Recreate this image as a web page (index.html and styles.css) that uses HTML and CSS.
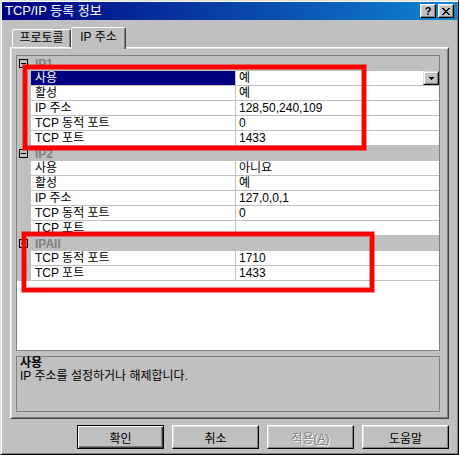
FILE: index.html
```html
<!DOCTYPE html>
<html lang="ko">
<head>
    <meta charset="UTF-8">
    <meta name="viewport" content="width=device-width, initial-scale=1.0">
    <title>TCP/IP 등록 정보</title>
    <link rel="stylesheet" href="styles.css">
</head>
<body>
    <div class="window">
        <!-- Заголовок окна -->
        <div class="titlebar">
            <span class="title">TCP/IP 등록 정보</span>
            <div class="caption-buttons">
                <button class="cap-btn help">?</button>
                <button class="cap-btn">
                    <svg width="8" height="7" viewBox="0 0 8 7" shape-rendering="crispEdges">
                        <path d="M0 0h2v1H0zM6 0h2v1H6zM1 1h2v1H1zM5 1h2v1H5zM2 2h4v1H2zM3 3h2v1H3zM2 4h4v1H2zM1 5h2v1H1zM5 5h2v1H5zM0 6h2v1H0zM6 6h2v1H6z" fill="#000"/>
                    </svg>
                </button>
            </div>
        </div>

        <div class="content">
            <!-- Вкладки -->
            <div class="tabs">
                <div class="tab">프로토콜</div>
                <div class="tab active">IP 주소</div>
            </div>

            <div class="panel">
                <div class="grid">
                    <div class="cat"><span class="exp"><svg width="9" height="9" viewBox="0 0 9 9" shape-rendering="crispEdges"><rect x="0.5" y="0.5" width="8" height="8" fill="none" stroke="#000"/><path d="M2 4h5v1H2z" fill="#000"/></svg></span>IP1</div>
                    <div class="row selected">
                        <div class="m"></div>
                        <div class="name">사용</div>
                        <div class="val">예<span class="drop"><svg width="5" height="3" viewBox="0 0 5 3" shape-rendering="crispEdges"><path d="M0 0h5v1H0zM1 1h3v1H1zM2 2h1v1H2z" fill="#000"/></svg></span></div>
                    </div>
                    <div class="row"><div class="m"></div><div class="name">활성</div><div class="val">예</div></div>
                    <div class="row"><div class="m"></div><div class="name">IP 주소</div><div class="val">128,50,240,109</div></div>
                    <div class="row"><div class="m"></div><div class="name">TCP 동적 포트</div><div class="val">0</div></div>
                    <div class="row"><div class="m"></div><div class="name">TCP 포트</div><div class="val">1433</div></div>

                    <div class="cat"><span class="exp"><svg width="9" height="9" viewBox="0 0 9 9" shape-rendering="crispEdges"><rect x="0.5" y="0.5" width="8" height="8" fill="none" stroke="#000"/><path d="M2 4h5v1H2z" fill="#000"/></svg></span>IP2</div>
                    <div class="row"><div class="m"></div><div class="name">사용</div><div class="val">아니요</div></div>
                    <div class="row"><div class="m"></div><div class="name">활성</div><div class="val">예</div></div>
                    <div class="row"><div class="m"></div><div class="name">IP 주소</div><div class="val">127,0,0,1</div></div>
                    <div class="row"><div class="m"></div><div class="name">TCP 동적 포트</div><div class="val">0</div></div>
                    <div class="row"><div class="m"></div><div class="name">TCP 포트</div><div class="val"></div></div>

                    <div class="cat"><span class="exp"><svg width="9" height="9" viewBox="0 0 9 9" shape-rendering="crispEdges"><rect x="0.5" y="0.5" width="8" height="8" fill="none" stroke="#000"/><path d="M2 4h5v1H2z" fill="#000"/></svg></span>IPAll</div>
                    <div class="row"><div class="m"></div><div class="name">TCP 동적 포트</div><div class="val">1710</div></div>
                    <div class="row"><div class="m"></div><div class="name">TCP 포트</div><div class="val">1433</div></div>
                </div>

                <!-- Описание выбранного свойства -->
                <div class="desc">
                    <div class="desc-title">사용</div>
                    <div>IP 주소를 설정하거나 해제합니다.</div>
                </div>
            </div>

            <div class="buttons">
                <button class="btn default">확인</button>
                <button class="btn">취소</button>
                <button class="btn disabled"><span>적용(<u>A</u>)</span></button>
                <button class="btn">도움말</button>
            </div>
        </div>

        <!-- Красные пометки поверх окна -->
        <div class="mark mark-1"></div>
        <div class="mark mark-2"></div>
    </div>
</body>
</html>
```

FILE: styles.css
```css
/* Общие стили */
* {
    box-sizing: border-box;
}

html, body {
    margin: 0;
    padding: 0;
}

body {
    font-family: "Liberation Sans", "Noto Sans CJK KR", sans-serif;
    font-size: 12px;
    background: #c0c0c0;
}

/* Окно */
.window {
    position: relative;
    width: 459px;
    height: 455px;
    background: #c0c0c0;
    border: 1px solid;
    border-color: #dfdfdf #000 #000 #dfdfdf;
    box-shadow: inset 1px 1px #fff, inset -1px -1px #808080;
    padding: 1px;
    display: flex;
    flex-direction: column;
}

.titlebar {
    height: 18px;
    display: flex;
    align-items: center;
    justify-content: space-between;
    padding: 0 3px 0 3px;
    background: linear-gradient(to right, #000080, #1084d0);
    color: #fff;
    font-size: 13px;
    line-height: 16px;
}

.caption-buttons {
    display: flex;
    gap: 2px;
}

.cap-btn {
    width: 16px;
    height: 14px;
    padding: 0;
    margin: 0;
    display: flex;
    align-items: center;
    justify-content: center;
    background: #c0c0c0;
    border: 1px solid;
    border-color: #fff #000 #000 #fff;
    box-shadow: inset -1px -1px #808080, inset 1px 1px #dfdfdf;
    font-family: "Liberation Sans", sans-serif;
    font-size: 11px;
    font-weight: bold;
    line-height: 12px;
    color: #000;
}

.content {
    flex: 1;
    display: flex;
    flex-direction: column;
    padding: 7px 8px 0 8px;
}

/* Вкладки */
.tabs {
    display: flex;
    align-items: flex-end;
    height: 20px;
    padding-left: 2px;
}

.tab {
    height: 18px;
    padding: 0 6px;
    line-height: 16px;
    background: #c0c0c0;
    border: 1px solid;
    border-color: #fff #404040 transparent #fff;
    border-bottom: 0;
    border-radius: 2px 2px 0 0;
    box-shadow: inset -1px 0 #808080;
    width: 59px;
    text-align: center;
}

.tab.active {
    position: relative;
    z-index: 1;
    width: 55px;
    height: 22px;
    margin-bottom: -2px;
    line-height: 18px;
    padding: 0;
}

.panel {
    height: 372px;
    border: 1px solid;
    border-color: #fff #404040 #404040 #fff;
    box-shadow: inset 1px 1px #dfdfdf, inset -1px -1px #808080;
    padding: 7px 8px 6px 5px;
    display: flex;
    flex-direction: column;
    gap: 5px;
}

/* Таблица свойств */
.grid {
    height: 296px;
    border: 1px solid #808080;
    background: #fff;
}

.cat {
    height: 15px;
    display: flex;
    align-items: center;
    background: #c0c0c0;
    color: #808080;
    font-weight: bold;
    line-height: 14px;
}

.exp {
    display: flex;
    margin: 0 7px 0 2px;
}

.row {
    display: grid;
    grid-template-columns: 14px 205px 1fr;
    height: 15px;
    line-height: 14px;
}

.row .m {
    background: #c0c0c0;
}

.row .name {
    padding-left: 4px;
    border-right: 1px solid #c0c0c0;
    border-bottom: 1px solid #c0c0c0;
    white-space: nowrap;
}

.row .val {
    display: flex;
    justify-content: space-between;
    padding-left: 3px;
    border-bottom: 1px solid #c0c0c0;
}

.row.selected .name {
    background: #000080;
    color: #fff;
}

.drop {
    width: 16px;
    height: 14px;
    display: flex;
    align-items: center;
    justify-content: center;
    background: #c0c0c0;
    border: 1px solid;
    border-color: #dfdfdf #000 #000 #dfdfdf;
    box-shadow: inset 1px 1px #fff, inset -1px -1px #808080;
    padding-top: 1px;
}

/* Описание */
.desc {
    height: 56px;
    border: 1px solid #808080;
    padding: 0 3px;
    line-height: 13px;
}

.desc-title {
    font-weight: bold;
}

/* Кнопки */
.buttons {
    display: flex;
    justify-content: flex-end;
    gap: 8px;
    margin-top: 6px;
}

.btn {
    width: 87px;
    height: 24px;
    padding: 0;
    background: #c0c0c0;
    border: 1px solid;
    border-color: #fff #000 #000 #fff;
    box-shadow: inset -1px -1px #808080, inset 1px 1px #dfdfdf;
    font-family: "Liberation Sans", "Noto Sans CJK KR", sans-serif;
    font-size: 12px;
    color: #000;
}

.btn.default {
    border-color: #000;
    box-shadow: inset 1px 1px #fff, inset -1px -1px #404040, inset -2px -2px #808080;
}

.btn.disabled {
    color: #808080;
    text-shadow: 1px 1px #fff;
}

/* Красные рамки */
.mark {
    position: absolute;
    border: 4px solid #f00;
    box-shadow: 0 0 0 1px rgba(255, 0, 0, 0.45), inset 0 0 0 1px rgba(255, 0, 0, 0.45);
}

.mark-1 {
    left: 22px;
    top: 64px;
    width: 343px;
    height: 85px;
}

.mark-2 {
    left: 21px;
    top: 231px;
    width: 352px;
    height: 60px;
}
```
